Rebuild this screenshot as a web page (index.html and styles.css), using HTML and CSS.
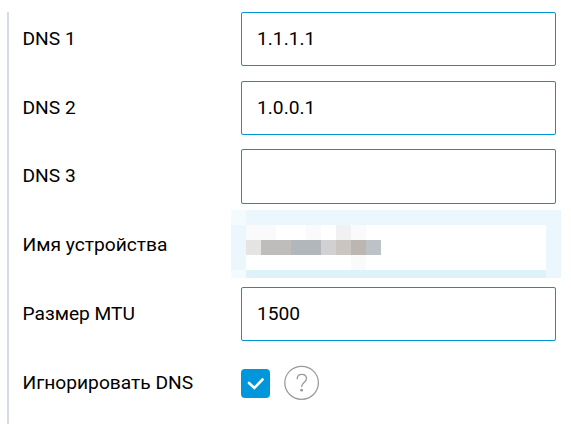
FILE: index.html
```html
<!DOCTYPE html>
<html lang="ru"><head><meta charset="utf-8"><title>DNS</title><link rel="stylesheet" href="styles.css"></head>
<body>
<form class="form">
<div class="row"><span class="label">DNS 1</span><div class="field">1.1.1.1</div></div>
<div class="row"><span class="label">DNS 2</span><div class="field">1.0.0.1</div></div>
<div class="row"><span class="label">DNS 3</span><div class="field tall"></div></div>
<div class="row"><span class="label">Имя устройства</span>
<svg class="mosaic" width="330" height="68" shape-rendering="crispEdges"><path fill="#ebf6fd" d="M0 0h330v68H0z"/><path fill="#f4fbfe" d="M0 0h15v15H0zM0 60h15v8H0z"/><path fill="#fff" d="M15 15h300v45H15z"/><path fill="#def2f9" d="M15 60h300v8H15z"/><path fill="#fafafa" d="M15 15h30v15H15zM75 15h15v15H75zM120 15h15v15h-15zM120 45h15v15h-15z"/><path fill="#f1f1f1" d="M105 15h15v15h-15z"/><path fill="#e5e4e2" d="M15 30h15v15H15z"/><path fill="#bfbdbb" d="M30 30h30v15H30z"/><path fill="#b2b7bb" d="M60 30h30v15H60z"/><path fill="#d1d1d1" d="M90 30h15v15H90z"/><path fill="#cbc5c1" d="M105 30h15v15h-15z"/><path fill="#bcb6b2" d="M120 30h15v15h-15z"/><path fill="#bdc2c6" d="M135 30h15v15h-15z"/></svg></div>
<div class="row"><span class="label">Размер MTU</span><div class="field">1500</div></div>
<div class="row last"><span class="label">Игнорировать DNS</span>
<svg class="check" width="29" height="29" viewBox="0 0 29 29"><rect width="29" height="29" rx="4" fill="#0096dc"/><path d="M8 14l5.3 5L21.5 10.5" fill="none" stroke="#fff" stroke-width="2.6" stroke-linecap="round"/></svg>
<svg class="help" width="36" height="36" viewBox="0 0 36 36" fill="none" stroke="#999" stroke-width="1.3"><ellipse cx="17.6" cy="17.8" rx="16.8" ry="16.5"/><path d="M13.2 14.2c0-3 1.8-4.8 4.6-4.8s4.6 1.7 4.6 4.3c0 3.6-4.6 4-4.6 7.5v.8"/><circle cx="17.6" cy="25.2" r="1.4" fill="#999" stroke="none"/></svg></div>
</form>
</body></html>
```
FILE: styles.css
```css
* { box-sizing: border-box; }
body { margin: 0; background: #fff; color: #000; font: 19.2px/24px Roboto, sans-serif; }
.form { margin: 12px 0 0 7px; height: 412px; border-left: 2px solid #d6dce3; }
.row { display: flex; align-items: center; height: 54px; margin-bottom: 14.7px; }
.label { width: 232px; padding-left: 13.5px; flex: none; }
.field { width: 315px; height: 54px; padding: 14px 15px; border: 1px solid #0096d6; border-radius: 2px; }
.tall { height: 55px; flex: none; margin-bottom: -1px; }
.mosaic { flex: none; margin: -2px 0 0 -10px; }
.last { padding-top: 2px; }
.help { margin-left: 14px; }
```
